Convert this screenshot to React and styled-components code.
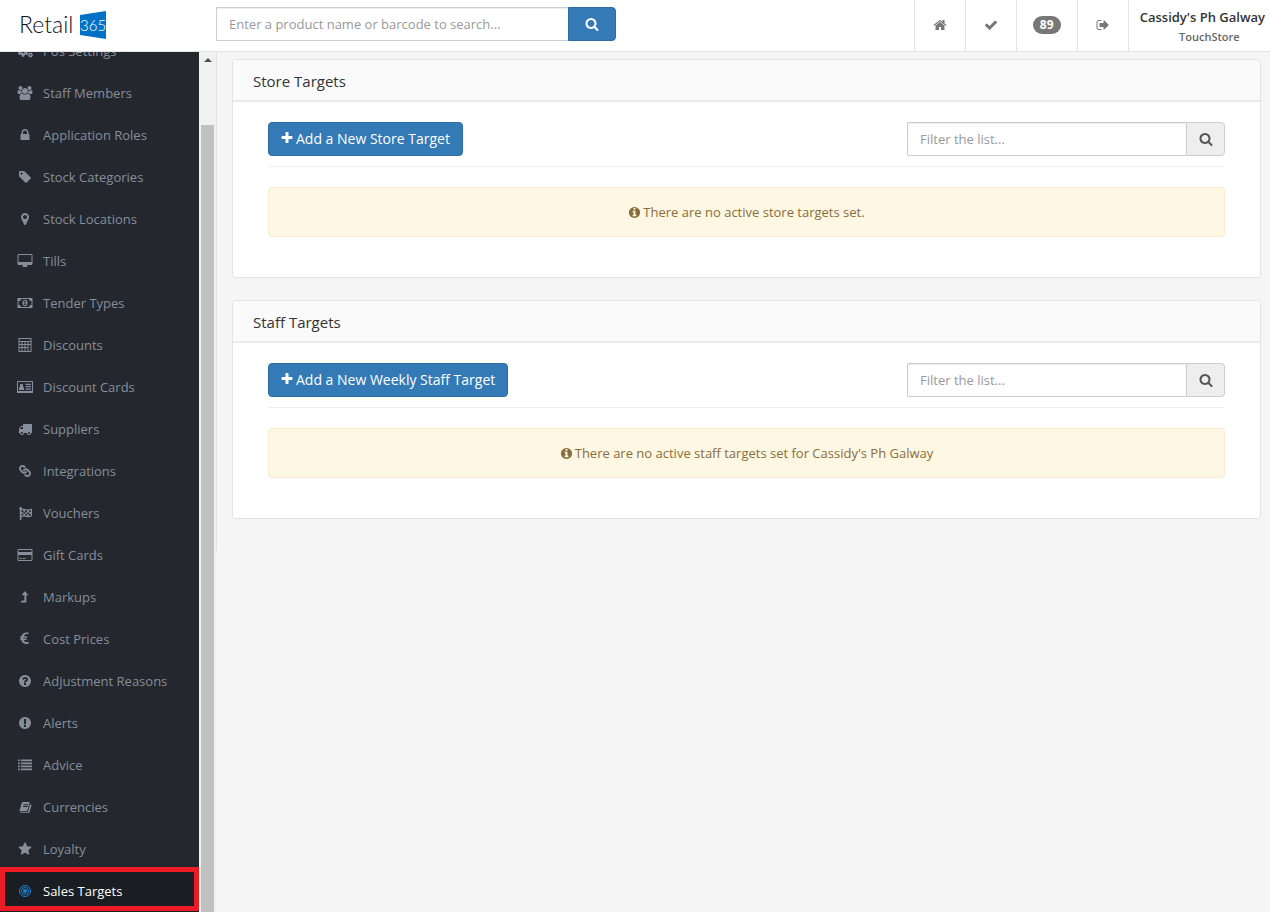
import React, { useState } from 'react'
import styled, { createGlobalStyle } from 'styled-components'
import { FaCogs, FaLink, FaFlagCheckered } from 'react-icons/fa'

const GlobalStyle = createGlobalStyle`
  * {
    box-sizing: border-box;
  }
  body {
    margin: 0;
    background: #f5f5f5;
    color: #333;
    font-family: "Open Sans", "Noto Sans", sans-serif;
    font-size: 13px;
    line-height: 20px;
  }
  button, input {
    font-family: inherit;
  }
`;

const CIRCLE = "M1664 896q0 209-103 385.5t-279.5 279.5-385.5 103-385.5-103-279.5-279.5-103-385.5 103-385.5 279.5-279.5 385.5-103 385.5 103 279.5 279.5 103 385.5z"

const paths = {
  home: "M1472 992v480q0 26-19 45t-45 19h-384v-384h-256v384h-384q-26 0-45-19t-19-45v-480q0-1 .5-3t.5-3l575-474 575 474q1 2 1 6zm223-69l-62 74q-8 9-21 11h-3q-13 0-21-7l-692-577-692 577q-12 8-24 7-13-2-21-11l-62-74q-8-10-7-23.5t11-21.5l719-599q32-26 76-26t76 26l244 204v-195q0-14 9-23t23-9h192q14 0 23 9t9 23v408l219 182q10 8 11 21.5t-7 23.5z",
  check: "M1671 566q0 40-28 68l-724 724-136 136q-28 28-68 28t-68-28l-136-136-362-362q-28-28-28-68t28-68l136-136q28-28 68-28t68 28l294 295 656-657q28-28 68-28t68 28l136 136q28 28 28 68z",
  signOut: "M704 1440q0 4 1 20t.5 26.5-3 23.5-10 19.5-20.5 6.5h-320q-119 0-203.5-84.5t-84.5-203.5v-704q0-119 84.5-203.5t203.5-84.5h320q13 0 22.5 9.5t9.5 22.5q0 4 1 20t.5 26.5-3 23.5-10 19.5-20.5 6.5h-320q-66 0-113 47t-47 113v704q0 66 47 113t113 47h312l11.5 1 11.5 3 8 5.5 7 9 2 13.5zm928-544q0 26-19 45l-544 544q-19 19-45 19t-45-19-19-45v-288h-448q-26 0-45-19t-19-45v-384q0-26 19-45t45-19h448v-288q0-26 19-45t45-19 45 19l544 544q19 19 19 45z",
  search: "M1216 832q0-185-131.5-316.5t-316.5-131.5-316.5 131.5-131.5 316.5 131.5 316.5 316.5 131.5 316.5-131.5 131.5-316.5zm512 832q0 52-38 90t-90 38q-54 0-90-38l-343-342q-179 124-399 124-143 0-273.5-55.5t-225-150-150-225-55.5-273.5 55.5-273.5 150-225 225-150 273.5-55.5 273.5 55.5 225 150 150 225 55.5 273.5q0 220-124 399l343 343q37 37 37 90z",
  plus: "M1600 736v192q0 40-28 68t-68 28h-416v416q0 40-28 68t-68 28h-192q-40 0-68-28t-28-68v-416h-416q-40 0-68-28t-28-68v-192q0-40 28-68t68-28h416v-416q0-40 28-68t68-28h192q40 0 68 28t28 68v416h416q40 0 68 28t28 68z",
  info: "M1152 1376v-160q0-14-9-23t-23-9h-96v-512q0-14-9-23t-23-9h-320q-14 0-23 9t-9 23v160q0 14 9 23t23 9h96v320h-96q-14 0-23 9t-9 23v160q0 14 9 23t23 9h448q14 0 23-9t9-23zm-128-896v-160q0-14-9-23t-23-9h-192q-14 0-23 9t-9 23v160q0 14 9 23t23 9h192q14 0 23-9t9-23z" + CIRCLE,
  users: "M529 896q-162 5-265 128h-134q-82 0-138-40.5t-56-118.5q0-353 124-353 6 0 43.5 21t97.5 42.5 119 21.5q67 0 133-23-5 37-5 66 0 139 81 256zm1071 637q0 120-73 189.5t-194 69.5h-874q-121 0-194-69.5t-73-189.5q0-53 3.5-103.5t14-109 26.5-108.5 43-97.5 62-81 85.5-53.5 111.5-20q10 0 43 21.5t73 48 107 48 135 21.5 135-21.5 107-48 73-48 43-21.5q61 0 111.5 20t85.5 53.5 62 81 43 97.5 26.5 108.5 14 109 3.5 103.5zm-1024-1277q0 106-75 181t-181 75-181-75-75-181 75-181 181-75 181 75 75 181zm704 384q0 159-112.5 271.5t-271.5 112.5-271.5-112.5-112.5-271.5 112.5-271.5 271.5-112.5 271.5 112.5 112.5 271.5zm576 225q0 78-56 118.5t-138 40.5h-134q-103-123-265-128 81-117 81-256 0-29-5-66 66 23 133 23 59 0 119-21.5t97.5-42.5 43.5-21q124 0 124 353zm-128-609q0 106-75 181t-181 75-181-75-75-181 75-181 181-75 181 75 75 181z",
  lock: "M640 768h512v-192q0-106-75-181t-181-75-181 75-75 181v192zm832 96v576q0 40-28 68t-68 28h-960q-40 0-68-28t-28-68v-576q0-40 28-68t68-28h32v-192q0-184 132-316t316-132 316 132 132 316v192h32q40 0 68 28t28 68z",
  tag: "M576 448q0-53-37.5-90.5t-90.5-37.5-90.5 37.5-37.5 90.5 37.5 90.5 90.5 37.5 90.5-37.5 37.5-90.5zm1067 576q0 53-37 90l-491 492q-39 37-91 37-53 0-90-37l-715-716q-38-37-64.5-101t-26.5-117v-416q0-52 38-90t90-38h416q53 0 117 26.5t102 64.5l715 714q37 39 37 91z",
  marker: "M1152 640q0-106-75-181t-181-75-181 75-75 181 75 181 181 75 181-75 75-181zm256 0q0 109-33 179l-364 774q-16 33-47.5 52t-67.5 19-67.5-19-46.5-52l-365-774q-33-70-33-179 0-212 150-362t362-150 362 150 150 362z",
  desktop: "M1728 992v-832q0-13-9.5-22.5t-22.5-9.5h-1600q-13 0-22.5 9.5t-9.5 22.5v832q0 13 9.5 22.5t22.5 9.5h1600q13 0 22.5-9.5t9.5-22.5zm128-832v1088q0 66-47 113t-113 47h-544q0 37 16 77.5t32 71 16 43.5q0 26-19 45t-45 19h-512q-26 0-45-19t-19-45q0-14 16-44t32-70 16-78h-544q-66 0-113-47t-47-113v-1088q0-66 47-113t113-47h1600q66 0 113 47t47 113z",
  money: "M-64 256h1920v1280h-1920zM384 384q0 106-75 181t-181 75h-64v512h64q106 0 181 75t75 181h1024q0-106 75-181t181-75h64v-512h-64q-106 0-181-75t-75-181zM896 480q-320 0-320 416t320 416 320-416-320-416zM720 1152v-96h112v-288h-112v-96l128-64h112v448h112v96z",
  calculator: "M64 0h1664v1792h-1664zM192 128v256h1408v-256zM192 512v256h256v-256zM576 512v256h256v-256zM960 512v256h256v-256zM1344 512v256h256v-256zM192 896v256h256v-256zM576 896v256h256v-256zM960 896v256h256v-256zM192 1280v384h256v-384zM576 1280v384h256v-384zM960 1280v384h256v-384zM1344 896v768h256v-768z",
  idCard: "M-128 128h2048v1536h-2048zM0 256v1152h1792v-1152zM128 1280v-220q0-170 160-200-60-70-60-180 0-210 220-210t220 210q0 110-60 180 160 30 160 200v220zM960 480h704v160h-704zM960 780h704v160h-704zM960 1080h704v160h-704z",
  card: "M1696 128q66 0 113 47t47 113v1216q0 66-47 113t-113 47h-1600q-66 0-113-47t-47-113v-1216q0-66 47-113t113-47zM96 256q-13 0-22.500 9.500t-9.500 22.500v224h1664v-224q0-13-9.500-22.500t-22.500-9.500zM1696 1536q13 0 22.500-9.500t9.500-22.500v-608h-1664v608q0 13 9.500 22.500t22.500 9.500zM192 1408v-128h256v128zM576 1408v-128h384v128z",
  truck: "M640 1408q0-52-38-90t-90-38-90 38-38 90 38 90 90 38 90-38 38-90zm-384-512h384v-256h-158q-13 0-22 9l-195 195q-9 9-9 22v30zm1280 512q0-52-38-90t-90-38-90 38-38 90 38 90 90 38 90-38 38-90zm256-1088v1024q0 15-4 26.5t-13.5 18.5-16.5 11.5-23.5 6-22.5 2-25.5 0-22.5-.5q0 106-75 181t-181 75-181-75-75-181h-384q0 106-75 181t-181 75-181-75-75-181h-64q-3 0-22.5.5t-25.5 0-22.5-2-23.5-6-16.5-11.5-13.5-18.5-4-26.5q0-26 19-45t45-19v-320q0-8-.5-35t0-38 2.5-34.5 6.5-37 14-30.5 22.5-30l198-198q19-19 50.5-32t58.5-13h160v-192q0-26 19-45t45-19h1024q26 0 45 19t19 45z",
  levelUp: "M1392 629q-18 43-64 43h-256v896q0 32-32 32h-704q-30 0-30-24 0-12 8-22l160-192q10-12 24-12h318v-678h-256q-42 0-58-37-17-37 10-69l320-384q18-22 48-22t48 22l320 384q28 34 10 69z",
  euro: "M1330 1307l35 159q3 12-3 22.5t-17 14.5l-5 1q-90 38-240 38-260 0-440-140t-240-380h-104q-32 0-32-32v-113q0-32 32-32h72q-2-64 3-119h-75q-32 0-32-32v-114q0-32 32-32h112q64-220 244-360t418-140q124 0 246 30 12 3 19 13 6 12 3 24l-42 158q-8 30-40 23-112-25-180-25-130 0-230 75t-145 202h430q34 4 31 38l-24 112q-5 28-31 28h-445q-4 54 0 119h397q34 4 31 38l-24 113q-6 26-31 26h-335q45 125 150 197t245 72q88 0 200-28 30-7 39 23z",
  question: "M1024 1376v-192q0-14-9-23t-23-9h-192q-14 0-23 9t-9 23v192q0 14 9 23t23 9h192q14 0 23-9t9-23zm256-672q0-88-55.5-163t-138.5-116-170-41q-243 0-371 213-15 24 8 42l132 100q7 6 19 6 16 0 25-12 53-68 86-92 34-24 86-24 48 0 85.5 26t37.5 59q0 38-20 61t-68 45q-63 28-115.5 86.5t-52.5 125.5v36q0 14 9 23t23 9h192q14 0 23-9t9-23q0-19 21.5-49.5t54.5-49.5q32-18 49-28.5t46-35 44.5-48 28-60.5 12.5-81z" + CIRCLE,
  exclamation: "M1024 1375v-190q0-14-9-23.5t-22-9.5h-192q-13 0-23 10t-10 23v190q0 13 10 23t23 10h192q13 0 22-9.5t9-23.5zm-2-344l18-621q0-12-10-18-10-8-24-8h-220q-14 0-24 8-10 6-10 18l17 621q0 10 10 17.5t24 7.5h185q14 0 23.5-7.5t10.5-17.5z" + CIRCLE,
  list: "M0 192h224v224h-224zM352 192h1440v224h-1440zM0 576h224v224h-224zM352 576h1440v224h-1440zM0 960h224v224h-224zM352 960h1440v224h-1440zM0 1344h224v224h-224zM352 1344h1440v224h-1440z",
  book: "M1703 478q40 57 18 129l-275 906q-19 64-76.5 107.5t-122.5 43.5h-923q-77 0-148.5-53.5t-99.5-131.5q-24-67-2-127 0-4 3-27l270-970q22-74 79-150t137-77l761 0q74 0 114 57t18 130l-274 906q-36 119-71 153.5t-129 34.5h-869q-27 0-38 15-11 16-1 43 24 70 144 70h923q29 0 56-15.500t35-41.500l300-987zM640 480l-21 64q-4 13 2 22.500t20 9.500h608q13 0 25.500-9.500t16.500-22.500l21-64q4-13-2-22.500t-20-9.500h-608q-13 0-25.500 9.500t-16.500 22.500zM557 736l-21 64q-4 13 2 22.500t20 9.500h608q13 0 25.500-9.500t16.500-22.500l21-64q4-13-2-22.500t-20-9.500h-608q-13 0-25.500 9.500t-16.500 22.500z",
  star: "M1728 647q0 22-26 48l-363 354 86 500q1 7 1 20 0 21-10.5 35.5t-30.5 14.5q-19 0-40-12l-449-236-449 236q-22 12-40 12-21 0-31.5-14.5t-10.5-35.5q0-6 2-20l86-500-364-354q-25-27-25-48 0-37 56-46l502-73 225-455q19-41 49-41t49 41l225 455 502 73q56 9 56 46z",
}

const Svg = styled.svg`
  flex: none;
  overflow: visible;
  fill: currentColor;
  fill-rule: evenodd;
`;

const Icon = ({ name, size = 14 }) => (
  <Svg viewBox="0 0 1792 1792" width={size} height={size} aria-hidden="true">
    <path d={paths[name]} />
  </Svg>
)

const Bullseye = () => (
  <Svg viewBox="0 0 28 28" width="14" height="14" aria-hidden="true">
    <g fill="none" stroke="currentColor" strokeWidth="2">
      <circle cx="14" cy="14" r="11" />
      <circle cx="14" cy="14" r="7" />
    </g>
    <circle cx="14" cy="14" r="4" />
  </Svg>
)

const Page = styled.div`
  display: flex;
  flex-direction: column;
  height: 100vh;
`;

const Header = styled.header`
  display: flex;
  flex: none;
  height: 52px;
  background: #fff;
  border-bottom: 1px solid #e4e4e4;
`;

const Logo = styled.a`
  display: flex;
  align-items: flex-start;
  width: 216px;
  padding: 9px 0 0 20px;
  text-decoration: none;
`;

const SearchForm = styled.form`
  display: flex;
  width: 400px;
  height: 34px;
  margin-top: 7px;
`;

const TextInput = styled.input`
  flex: 1;
  min-width: 0;
  padding: 6px 12px;
  border: 1px solid #ccc;
  border-right: 0;
  border-radius: ${props => props.$rounded ? "2px 0 0 2px" : "0"};
  box-shadow: inset 0 1px 1px rgba(0, 0, 0, 0.075);
  background: #fff;
  color: #555;
  font-size: 13px;
  &::placeholder {
    color: #999;
    opacity: 1;
  }
`;

const SearchButton = styled.button`
  display: flex;
  align-items: center;
  justify-content: center;
  width: 48px;
  padding: 0;
  border: 1px solid #2e6da4;
  border-radius: 0 4px 4px 0;
  background: #337ab7;
  color: #fff;
`;

const HeaderNav = styled.nav`
  display: flex;
  margin-left: auto;
`;

const HeaderLink = styled.a`
  display: flex;
  align-items: center;
  justify-content: center;
  width: ${props => props.$wide ? "61px" : "51px"};
  padding-bottom: 1px;
  border-left: 1px solid #e4e4e4;
  color: #777;
  text-decoration: none;
`;

const Badge = styled.span`
  padding: 0 7px;
  border-radius: 10px;
  background: #777;
  color: #fff;
  font-size: 12px;
  font-weight: 700;
  line-height: 18px;
`;

const Account = styled.div`
  display: flex;
  flex-direction: column;
  align-items: center;
  padding: 7px 5px 0 11px;
  border-left: 1px solid #e4e4e4;
  font-weight: 600;
`;

const StoreName = styled.span`
  color: #333;
`;

const AppName = styled.span`
  padding-left: 14px;
  color: #666;
  font-size: 11px;
`;

const Body = styled.div`
  display: flex;
  flex: 1;
  min-height: 0;
`;

const Sidebar = styled.nav`
  display: flex;
  flex: none;
  flex-direction: column;
  justify-content: flex-end;
  width: 199px;
  overflow: hidden;
  background: #24272d;
`;

const SideLink = styled.a`
  position: relative;
  display: flex;
  flex: none;
  align-items: center;
  height: 42px;
  gap: 8px;
  padding-left: 15px;
  background: ${props => props.$active ? "#1a1d21" : "transparent"};
  color: ${props => props.$active ? "#fff" : "#868e9b"};
  text-decoration: none;
`;

const SideIcon = styled.span`
  display: flex;
  justify-content: center;
  width: 20px;
  color: ${props => props.$active ? "#1c84d4" : "inherit"};
`;

const Highlight = styled.span`
  position: absolute;
  inset: -3px 0 1px;
  border: 5px solid #ed1c24;
`;

const Turned = styled.span`
  display: flex;
  transform: rotate(90deg);
`;

const ScrollTrack = styled.div`
  display: flex;
  flex: none;
  flex-direction: column;
  align-items: center;
  width: 17px;
  padding: 6px 2px 0;
  background: #f1f1f1;
`;

const ScrollThumb = styled.div`
  flex: 1;
  align-self: stretch;
  margin-top: 63px;
  background: #c1c1c1;
`;

const Main = styled.main`
  flex: 1;
  min-width: 0;
  overflow: auto;
`;

const Content = styled.div`
  display: flex;
  flex-direction: column;
  gap: 22px;
  padding: 7px 9px 32px 15px;
  border-left: 1px solid #e4e4e4;
`;

const Panel = styled.section`
  border: 1px solid #e4e4e4;
  border-radius: 3px;
  background: #fff;
`;

const PanelTitle = styled.h2`
  margin: 0;
  padding: 11px 20px 9px;
  border-bottom: 2px solid #eaeaea;
  background: #fafafa;
  font-size: 15px;
  font-weight: 400;
  line-height: 20px;
`;

const PanelBody = styled.div`
  padding: 20px 35px 40px;
`;

const Toolbar = styled.div`
  display: flex;
  justify-content: space-between;
  padding-bottom: 10px;
  border-bottom: 1px solid #eee;
`;

const AddButton = styled.button`
  display: flex;
  align-items: center;
  gap: 2px;
  height: 34px;
  padding: 0 12px 2px 11px;
  border: 1px solid #2e6da4;
  border-radius: 4px;
  background: #337ab7;
  color: #fff;
  font-size: 14px;
`;

const FilterForm = styled.form`
  display: flex;
  width: 318px;
  height: 34px;
`;

const FilterButton = styled.button`
  display: flex;
  align-items: center;
  justify-content: center;
  width: 39px;
  padding: 0;
  border: 1px solid #ccc;
  border-radius: 0 4px 4px 0;
  background: #eee;
  color: #555;
`;

const Alert = styled.p`
  display: flex;
  align-items: center;
  justify-content: center;
  gap: 2px;
  margin: 20px 0 0;
  padding: 14px;
  border: 1px solid #faebcc;
  border-radius: 4px;
  background: #fdf7e3;
  color: #8a6d3b;
`;

const menu = [
  { label: "Pos Settings", icon: <FaCogs size={15} /> },
  { label: "Staff Members", icon: <Icon name="users" /> },
  { label: "Application Roles", icon: <Icon name="lock" /> },
  { label: "Stock Categories", icon: <Icon name="tag" /> },
  { label: "Stock Locations", icon: <Icon name="marker" /> },
  { label: "Tills", icon: <Icon name="desktop" /> },
  { label: "Tender Types", icon: <Icon name="money" /> },
  { label: "Discounts", icon: <Icon name="calculator" /> },
  { label: "Discount Cards", icon: <Icon name="idCard" /> },
  { label: "Suppliers", icon: <Icon name="truck" /> },
  { label: "Integrations", icon: <Turned><FaLink size={12} /></Turned> },
  { label: "Vouchers", icon: <FaFlagCheckered size={13} /> },
  { label: "Gift Cards", icon: <Icon name="card" /> },
  { label: "Markups", icon: <Icon name="levelUp" /> },
  { label: "Cost Prices", icon: <Icon name="euro" /> },
  { label: "Adjustment Reasons", icon: <Icon name="question" /> },
  { label: "Alerts", icon: <Icon name="exclamation" /> },
  { label: "Advice", icon: <Icon name="list" /> },
  { label: "Currencies", icon: <Icon name="book" size={13} /> },
  { label: "Loyalty", icon: <Icon name="star" /> },
  { label: "Sales Targets", icon: <Bullseye /> },
]

const RetailLogo = () => (
  <svg width="88" height="32" viewBox="0 0 88 32" role="img" aria-label="Retail 365">
    <path d="M60 6 L86 2 V30 L60 26 Z" fill="#0072c6" />
    <text x="-1" y="24" fontFamily="Lato, sans-serif" fontWeight="300" fontSize="23" fill="#111">Retail</text>
    <text x="60" y="22" fontFamily="Lato, sans-serif" fontWeight="300" fontSize="15" fill="#fff">365</text>
  </svg>
)

const TargetPanel = ({ title, button, message }) => {
  const [filter, setFilter] = useState("")

  return (
    <Panel>
      <PanelTitle>{title}</PanelTitle>
      <PanelBody>
        <Toolbar>
          <AddButton type="button"><Icon name="plus" /><span>{button}</span></AddButton>
          <FilterForm onSubmit={e => e.preventDefault()}>
            <TextInput
              $rounded
              type="text"
              aria-label={"Filter " + title}
              placeholder="Filter the list..."
              value={filter}
              onChange={e => setFilter(e.target.value)}
            />
            <FilterButton aria-label="Filter"><Icon name="search" /></FilterButton>
          </FilterForm>
        </Toolbar>
        <Alert><Icon name="info" size={13} /><span>{message}</span></Alert>
      </PanelBody>
    </Panel>
  )
}

const App = () => {
  const [query, setQuery] = useState("")
  const active = "Sales Targets"

  return (
    <Page>
      <GlobalStyle />
      <Header>
        <Logo href="#"><RetailLogo /></Logo>
        <SearchForm onSubmit={e => e.preventDefault()}>
          <TextInput
            type="text"
            aria-label="Search products"
            placeholder="Enter a product name or barcode to search..."
            value={query}
            onChange={e => setQuery(e.target.value)}
          />
          <SearchButton aria-label="Search"><Icon name="search" /></SearchButton>
        </SearchForm>
        <HeaderNav>
          <HeaderLink href="#" aria-label="Home"><Icon name="home" /></HeaderLink>
          <HeaderLink href="#" aria-label="Tasks"><Icon name="check" /></HeaderLink>
          <HeaderLink href="#" $wide><Badge>89</Badge></HeaderLink>
          <HeaderLink href="#" aria-label="Sign out"><Icon name="signOut" /></HeaderLink>
          <Account>
            <StoreName>Cassidy's Ph Galway</StoreName>
            <AppName>TouchStore</AppName>
          </Account>
        </HeaderNav>
      </Header>
      <Body>
        <Sidebar>
          {menu.map(item => (
            <SideLink key={item.label} href="#" $active={item.label === active}>
              <SideIcon $active={item.label === active}>{item.icon}</SideIcon>
              {item.label}
              {item.label === active && <Highlight />}
            </SideLink>
          ))}
        </Sidebar>
        <ScrollTrack>
          <svg width="8" height="4" viewBox="0 0 8 4" aria-hidden="true">
            <path d="M4 0 L8 4 H0 Z" fill="#505050" />
          </svg>
          <ScrollThumb />
        </ScrollTrack>
        <Main>
          <Content>
            <TargetPanel
              title="Store Targets"
              button="Add a New Store Target"
              message="There are no active store targets set."
            />
            <TargetPanel
              title="Staff Targets"
              button="Add a New Weekly Staff Target"
              message="There are no active staff targets set for Cassidy's Ph Galway"
            />
          </Content>
        </Main>
      </Body>
    </Page>
  )
}

export default App;
